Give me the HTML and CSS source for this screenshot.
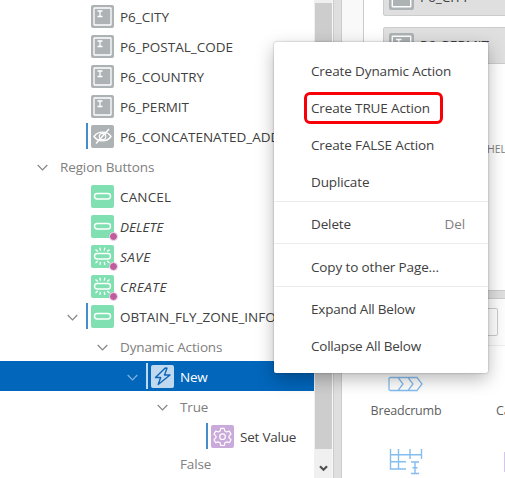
FILE: index.html
```
<!DOCTYPE html>
<html lang="en">
<head>
<meta charset="utf-8">
<title>Page Designer</title>
<link rel="stylesheet" href="styles.css">
</head>
<body>
<svg class="defs" aria-hidden="true">
  <symbol id="text-field" viewBox="0 0 23 23"><rect width="23" height="23" rx="2" fill="#adb2b5"/><rect x="3" y="3" width="17" height="17" rx=".5" fill="none" stroke="#fff" stroke-width="1.3"/><path d="M6.500 6h5M6.500 11.500h5M9 6v5.500" stroke="#fff" stroke-width="1.3"/></symbol>
  <symbol id="hidden-field" viewBox="0 0 23 23"><rect width="23" height="23" rx="2" fill="#adb2b5"/><path d="M3 11.5C7 5.7 16 5.7 20 11.5C16 17.3 7 17.3 3 11.5ZM18 4L5 18.5" fill="none" stroke="#fff" stroke-width="1.4"/><circle cx="11.5" cy="11.5" r="3.2" fill="none" stroke="#fff" stroke-width="1.2"/></symbol>
  <symbol id="button" viewBox="0 0 23 23"><rect width="23" height="23" rx="2" fill="#81e0b2"/><rect x="3.5" y="8.5" width="16" height="5.5" rx="2.75" fill="none" stroke="#fff" stroke-width="1.4"/></symbol>
  <symbol id="hot-button" viewBox="0 0 23 23"><use href="#button"/><path d="M8.8 2.700l.7 3M13.900 2.700l-.7 3M4.500 4.500l2.300 2M18.500 4.500l-2.300 2M8.800 19.800l.7-3M13.900 19.800l-.7-3M4.500 18l2.300-2M18.500 18l-2.300-2" stroke="#fff" stroke-width="1.3"/></symbol>
  <symbol id="bolt" viewBox="0 0 23 23"><rect width="23" height="23" rx="2" fill="#c0d9ee"/><path d="M14.2 3L4.5 12.5h5.2L7.2 19.5L19 10h-5.5L16 3.2Z" fill="none" stroke="#0b66b9" stroke-width="1.4" stroke-linejoin="round"/></symbol>
  <symbol id="gear" viewBox="0 0 23 23"><rect width="23" height="23" rx="2" fill="#caaadb"/><path d="M9.800 3.300h3.400l.7 2.800 1.600.9 2.800-.9 1.700 3-2 2v1.600l2 2-1.700 3-2.800-.8-1.600.9-.7 2.700H9.800l-.7-2.700-1.600-.9-2.800.8-1.700-3 2-2v-1.600l-2-2 1.700-3 2.800.9 1.600-.9Z" fill="none" stroke="#fff" stroke-width="1.2" stroke-linejoin="round"/><circle cx="11.500" cy="11.700" r="2.800" fill="none" stroke="#fff" stroke-width="1.2"/></symbol>
  <symbol id="chevron" viewBox="0 0 11 7"><path d="M.7 1L5.5 5.8L10.3 1" fill="none" stroke="currentColor" stroke-width="1.2"/></symbol>
</svg>

<div class="app">
  <div class="tree">
    <div class="row d3"><svg class="icon"><use href="#text-field"/></svg><span class="label">P6_CITY</span></div>
    <div class="row d3"><svg class="icon"><use href="#text-field"/></svg><span class="label">P6_POSTAL_CODE</span></div>
    <div class="row d3"><svg class="icon"><use href="#text-field"/></svg><span class="label">P6_COUNTRY</span></div>
    <div class="row d3"><svg class="icon"><use href="#text-field"/></svg><span class="label">P6_PERMIT</span></div>
    <div class="row d3 changed"><svg class="icon"><use href="#hidden-field"/></svg><span class="label">P6_CONCATENATED_ADDRESS</span></div>
    <div class="row d1 group"><svg class="chev"><use href="#chevron"/></svg><span class="label">Region Buttons</span></div>
    <div class="row d3"><svg class="icon"><use href="#button"/></svg><span class="label wide">CANCEL</span></div>
    <div class="row d3 cond"><svg class="icon"><use href="#button"/></svg><span class="label">DELETE</span></div>
    <div class="row d3 cond"><svg class="icon"><use href="#hot-button"/></svg><span class="label wider">SAVE</span></div>
    <div class="row d3 cond"><svg class="icon"><use href="#hot-button"/></svg><span class="label wider">CREATE</span></div>
    <div class="row d2 changed"><svg class="chev"><use href="#chevron"/></svg><svg class="icon"><use href="#button"/></svg><span class="label">OBTAIN_FLY_ZONE_INFO</span></div>
    <div class="row d3 group"><svg class="chev"><use href="#chevron"/></svg><span class="label">Dynamic Actions</span></div>
    <div class="row d4 changed selected"><svg class="chev"><use href="#chevron"/></svg><svg class="icon"><use href="#bolt"/></svg><span class="label tight">New</span></div>
    <div class="row d5 group"><svg class="chev"><use href="#chevron"/></svg><span class="label">True</span></div>
    <div class="row d7 changed"><svg class="icon"><use href="#gear"/></svg><span class="label tight">Set Value</span></div>
    <div class="row d6 group last"><span class="label">False</span></div>
  </div>
  <div class="scrollbar"><div class="track-top"></div><div class="thumb"></div><div class="arrow"><svg width="9" height="7" viewBox="0 0 9 7"><path d="M1 1.3L4.5 4.8L8 1.3" fill="none" stroke="#505050" stroke-width="2.2"/></svg></div></div>
  <div class="splitter"></div>
  <div class="main">
    <div class="layout">
      <div class="canvas">
        <div class="card"><svg class="icon"><use href="#text-field"/></svg><span class="label">P6_CITY</span></div>
        <div class="card"><svg class="icon"><use href="#text-field"/></svg><span class="label">P6_PERMIT</span></div>
        <div class="section">HELP</div>
      </div>
    </div>
    <div class="hsplit"></div>
    <div class="gallery">
      <div class="search"><div class="field"></div></div>
      <div class="tiles">
        <div class="tile"><svg width="36" height="16" viewBox="0 0 36 16" fill="none" stroke="#84bdef" stroke-width="1.3"><path d="M2.5 1.5H29L34 8L29 14.500H2.500Q1 14.500 1 13V3Q1 1.500 2.500 1.500ZM10 1.500L15 8L10 14.500M20 1.500L25 8L20 14.500"/></svg><span>Breadcrumb</span></div>
        <div class="tile next"><span>Calendar</span></div>
        <div class="tile second"><svg width="34" height="26" viewBox="0 0 34 26" fill="none" stroke="#84bdef" stroke-width="1.4"><path d="M1.500 0V20H17M9.500 0V20M1 5.700H33M1 12.700H17M21 0V10M32.500 0V10M22 13H30M22 24.500H30M26 13V24.500M23.500 18.700H28.500"/></svg></div>
        <div class="tile next"><div class="chip"></div></div>
      </div>
    </div>
  </div>
</div>

<div class="menu">
  <div class="item"><span>Create Dynamic Action</span></div>
  <div class="item marked"><span>Create TRUE Action</span></div>
  <div class="item"><span>Create FALSE Action</span></div>
  <div class="item"><span>Duplicate</span></div>
  <div class="sep"></div>
  <div class="item"><span>Delete</span><span class="key">Del</span></div>
  <div class="sep"></div>
  <div class="item copy"><span>Copy to other Page...</span></div>
  <div class="sep"></div>
  <div class="item"><span class="tight">Expand All Below</span></div>
  <div class="item"><span class="tight">Collapse All Below</span></div>
</div>
</body>
</html>
```
FILE: styles.css
```
*, *::before, *::after { box-sizing: border-box; }
body { margin: 0; width: 505px; height: 478px; overflow: hidden; background: #fff; font: 13.5px/20px "Open Sans", "Noto Sans", sans-serif; color: #404040; }
.defs { position: absolute; width: 0; height: 0; }
svg { display: block; flex: none; }
span { white-space: nowrap; }
.app { display: flex; height: 478px; }

.tree { width: 314px; flex: none; padding-top: 1px; overflow: hidden; }
.row { display: flex; align-items: center; height: 30px; position: relative; }
.row .label { padding-top: 2px; }
.icon { width: 23px; height: 23px; margin-right: 6px; }
.chev { width: 11px; height: 7px; color: #858585; margin-right: 12px; margin-top: 2px; }
.d1 { padding-left: 37px; }
.d2 { padding-left: 67px; }
.d3 { padding-left: 91px; }
.d3.group { padding-left: 97px; }
.d4 { padding-left: 127px; }
.d5 { padding-left: 157px; }
.d6 { padding-left: 180px; }
.d7 { padding-left: 211px; }
.changed .chev { margin-right: 13px; }
.changed::before { content: ""; position: absolute; left: 86px; top: 2px; width: 2px; height: 26px; background: #448cca; }
.d4.changed::before { left: 146px; background: #bfd9ee; }
.d7.changed::before { left: 206px; }
.cond .label { font-style: italic; }
.cond::after { content: ""; position: absolute; left: 109px; top: 21px; width: 9px; height: 9px; border: 1px solid #f3dcea; border-radius: 50%; background: #be5c9d; }
.group { color: #808080; letter-spacing: -.13px; }
.tight { letter-spacing: -.22px; }
.wide { letter-spacing: .15px; }
.wider { letter-spacing: .5px; }
.selected { background: #0266bb; color: #fff; }
.selected .chev { color: #80b3dd; }
.last { height: 26px; }
.last .label { padding-top: 0; }

.scrollbar { width: 19px; flex: none; padding-left: 1px; background: #f0f0f0; display: flex; flex-direction: column; border-right: 1px solid #f8f8f8; }
.track-top { height: 3px; }
.thumb { height: 446px; background: #cdcdcd; }
.arrow { flex: 1; padding: 16px 0 0 4px; }
.splitter { width: 9px; flex: none; background: #dfdfdf; border: 1px solid #ccc; border-width: 0 1px; }
.main { flex: 1; min-width: 0; display: flex; flex-direction: column; overflow: hidden; }
.layout { height: 290px; flex: none; padding-left: 21px; background: #f9f9f9; overflow: hidden; }
.canvas { height: 311px; border-left: 1px solid #ccc; background: #fff; padding-left: 19px; margin-top: -21px; }
.card { display: flex; align-items: center; width: 160px; height: 37px; margin-bottom: 11px; padding-left: 6px; background: #dfdfdf; border: 1px solid #ccc; border-radius: 2px; }
.card .icon { width: 25px; height: 25px; margin-left: -1px; }
.card .label { padding-bottom: 2px; }
.section { margin: 78px 0 0 104px; font-size: 10.5px; line-height: 14px; color: #808080; }
.hsplit { height: 9px; flex: none; background: #dfdfdf; border: 1px solid #ccc; border-width: 1px 0; }
.gallery { flex: 1; }
.search { height: 47px; padding: 9px 7px 0 20px; border-bottom: 1px solid #eee; background: #fdfdfd; }
.field { height: 28px; border: 1px solid #ccc; border-radius: 2px; background: #fff; }
.tiles { display: grid; grid-template-columns: 128px 127px; grid-template-rows: 73px 60px; padding-top: 30px; font-size: 12.5px; letter-spacing: -.2px; color: #606060; }
.tile { display: flex; flex-direction: column; align-items: center; gap: 9px; }
.next { align-items: flex-start; padding: 25px 0 0 26px; }
.second { padding-top: 0; }
.chip { width: 35px; height: 20px; margin: -22px 0 0 8px; border: 1px solid #d5c6ec; }

.menu { position: absolute; left: 274px; top: 42px; width: 214px; height: 331px; padding-top: 11px; background: #fff; border-radius: 2px; letter-spacing: -.13px; box-shadow: 0 0 2px rgba(0,0,0,.35), 0 6px 18px rgba(0,0,0,.28); }
.item { display: flex; justify-content: space-between; align-items: center; height: 37px; padding: 0 23px 2px 37px; }
.sep { height: 1px; margin: 0 0 4px; background: #ececec; }
.copy { height: 38px; padding-top: 1px; }
.key { color: #808080; }
.marked { position: relative; }
.marked::after { content: ""; position: absolute; left: 30px; top: 2px; width: 139px; height: 32px; border: 3px solid #f80008; border-radius: 6px; }
```
